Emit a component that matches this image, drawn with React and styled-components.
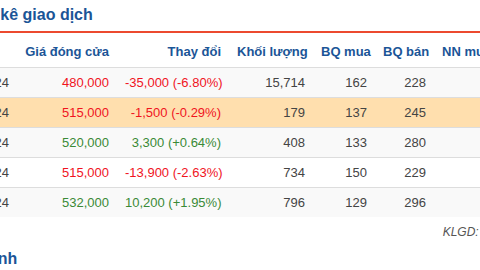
import React from 'react';
import styled, { createGlobalStyle } from 'styled-components';

const GlobalStyle = createGlobalStyle`
    html, body {
        margin: 0;
        padding: 0;
        background: #fff;
        overflow: hidden;
    }
    body {
        font-family: 'Liberation Sans', Arial, sans-serif;
        color: #333;
    }
`;

const rows = [
    { date: '06/12/2024', price: '480,000', change: '-35,000 (-6.80%)', vol: '15,714', buy: 162, sell: 228, up: false },
    { date: '05/12/2024', price: '515,000', change: '-1,500 (-0.29%)', vol: '179', buy: 137, sell: 245, up: false, active: true },
    { date: '04/12/2024', price: '520,000', change: '3,300 (+0.64%)', vol: '408', buy: 133, sell: 280, up: true },
    { date: '03/12/2024', price: '515,000', change: '-13,900 (-2.63%)', vol: '734', buy: 150, sell: 229, up: false },
    { date: '02/12/2024', price: '532,000', change: '10,200 (+1.95%)', vol: '796', buy: 129, sell: 296, up: true },
];

export default function App() {
    return (
        <>
            <GlobalStyle />
            <Page>
                <Title>Thống kê giao dịch</Title>
                <Table>
                    <colgroup>
                        <col style={{ width: 81 }} />
                        <col style={{ width: 100 }} />
                        <col style={{ width: 112 }} />
                        <col style={{ width: 84 }} />
                        <col style={{ width: 62 }} />
                        <col style={{ width: 59 }} />
                        <col style={{ width: 72 }} />
                        <col style={{ width: 74 }} />
                    </colgroup>
                    <thead>
                        <tr>
                            <Th $left>Ngày</Th>
                            <Th>Giá đóng cửa</Th>
                            <Th>Thay đổi</Th>
                            <Th>Khối lượng</Th>
                            <Th>BQ mua</Th>
                            <Th>BQ bán</Th>
                            <Th $left>NN mua</Th>
                            <Th $left>NN bán</Th>
                        </tr>
                    </thead>
                    <tbody>
                        {rows.map((r, i) => (
                            <Row key={r.date} $striped={i % 2 === 0} $active={r.active}>
                                <Td $left>{r.date}</Td>
                                <Td $tone={r.up ? 'up' : 'down'}>{r.price}</Td>
                                <Td $tone={r.up ? 'up' : 'down'}>{r.change}</Td>
                                <Td>{r.vol}</Td>
                                <Td>{r.buy}</Td>
                                <Td>{r.sell}</Td>
                                <Td></Td>
                                <Td></Td>
                            </Row>
                        ))}
                    </tbody>
                </Table>
                <Note>KLGD: đơn vị 10 cổ phiếu</Note>
                <Heading>Tài chính</Heading>
            </Page>
        </>
    );
}

const Page = styled.div`
    width: 644px;
    margin-left: -64px;
`;

const Title = styled.h2`
    margin: 0;
    padding: 5px 0 7px 11px;
    font-size: 16px;
    line-height: 19px;
    font-weight: bold;
    color: #1b5597;
    border-bottom: 2px solid #ec4a2f;
`;

const Table = styled.table`
    width: 644px;
    table-layout: fixed;
    border-collapse: collapse;
    font-size: 13px;
`;

const Th = styled.th`
    padding: 10px 8px 6px;
    line-height: 18px;
    font-weight: bold;
    color: #1b5597;
    text-align: ${(p) => (p.$left ? 'left' : 'right')};
    white-space: nowrap;
    overflow: hidden;
    border-bottom: 1px solid #ddd;
`;

const Row = styled.tr`
    background: ${(p) => (p.$active ? '#ffdfae' : p.$striped ? '#f9f9f9' : '#fff')};
`;

const Td = styled.td`
    padding: 6px 8px;
    line-height: 17px;
    text-align: ${(p) => (p.$left ? 'left' : 'right')};
    white-space: nowrap;
    color: ${(p) => (p.$tone === 'up' ? '#3a8a36' : p.$tone === 'down' ? '#f0141e' : '#444')};
    border-top: 1px solid #ddd;
`;

const Note = styled.div`
    padding: 8px 0 0;
    font-size: 12px;
    line-height: 15px;
    font-style: italic;
    color: #555;
    text-align: right;
`;

const Heading = styled.h2`
    margin: 0;
    padding: 9px 0 0 11px;
    font-size: 16px;
    line-height: 19px;
    font-weight: bold;
    color: #1b5597;
`;
